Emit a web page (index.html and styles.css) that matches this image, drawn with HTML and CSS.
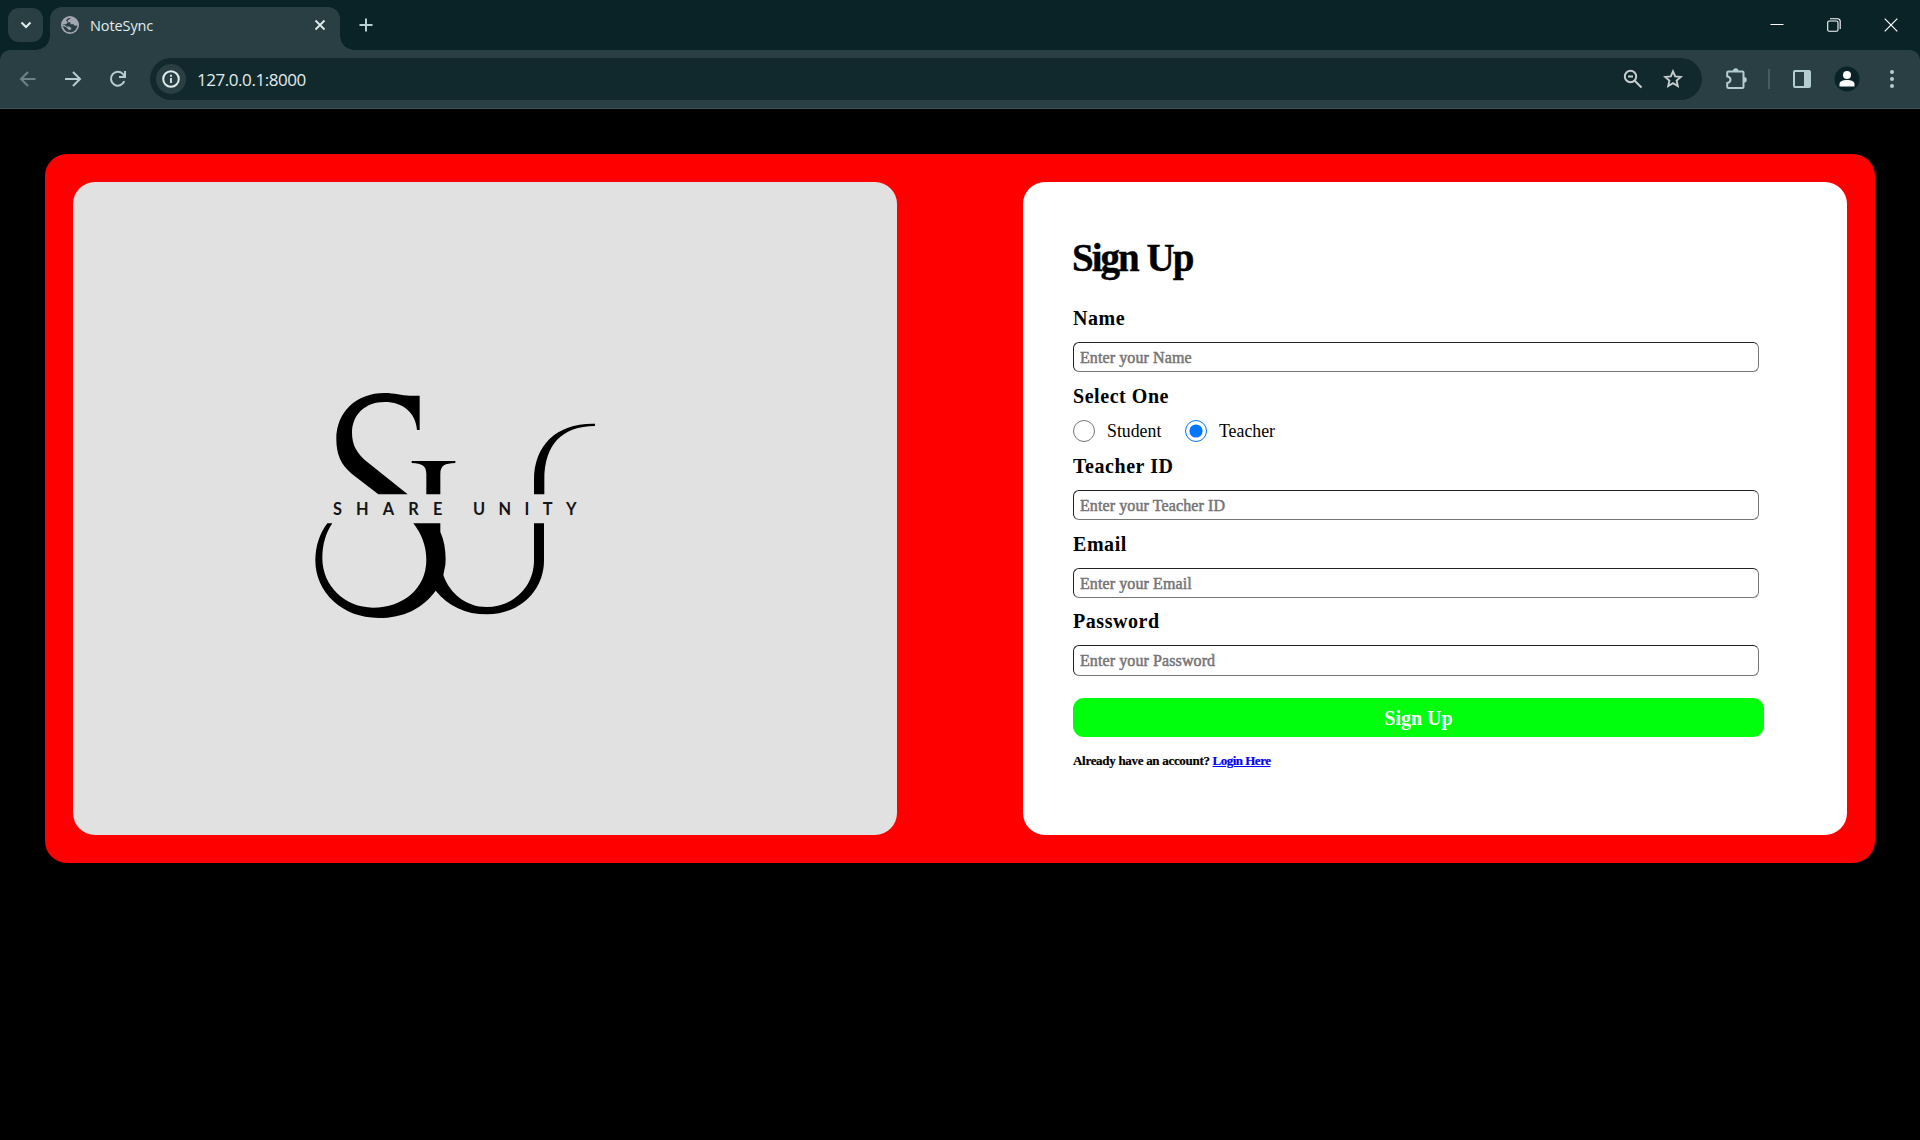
FILE: index.html
```html
<!DOCTYPE html>
<html lang="en">
<head>
<meta charset="utf-8">
<title>NoteSync</title>
<link rel="stylesheet" href="styles.css">
</head>
<body>
<header class="browser">
  <div class="tabstrip">
    <div class="tab-search"><svg width="12" height="12" viewBox="0 0 12 12"><path d="M1.5 3.5 6 8l4.500-4.500" fill="none" stroke="#e3ecec" stroke-width="2"/></svg></div>
    <div class="tab">
      <svg class="globe" width="18" height="18" viewBox="0 0 18 18"><circle cx="9" cy="9" r="9" fill="#a3a6b0"/><path d="M10.200 1.900L6.800 4.300V6.200H9.300L9.600 8.300H12.500L13.600 9.800L16.300 9.400C16 13.200 13 16.200 9.300 16.300L7.300 16V14.200L10.200 13.600V12L8.300 10.600H5.200L3.800 9L1.800 8.500C2 11.500 3.300 14 5.500 15.400L7.300 16L7.500 13.300L5.500 11.500L1.700 9.500V8.200H5L6.800 6.500L5 4.500L7 2.200Z" fill="#293f43"/></svg>
      <span class="tab-title">NoteSync</span>
      <svg class="tab-close" width="12" height="12" viewBox="0 0 12 12"><path d="M1.500 1.500l9 9M10.500 1.500l-9 9" stroke="#e3ecec" stroke-width="1.800"/></svg>
    </div>
    <svg class="new-tab" width="14" height="14" viewBox="0 0 14 14"><path d="M7 .5v13M.5 7h13" stroke="#b9cfd2" stroke-width="2"/></svg>
    <div class="window-controls">
      <svg width="14" height="14" viewBox="0 0 14 14"><path d="M.5 6.500h13" stroke="#fff"/></svg>
      <svg width="14" height="14" viewBox="0 0 14 14"><g fill="none" stroke="#fff" stroke-width="1.100"><rect x=".7" y="3" width="10.300" height="10.300" rx="1.500"/><path d="M3 .8h7.500a2.700 2.700 0 0 1 2.700 2.700V11"/></g></svg>
      <svg width="14" height="14" viewBox="0 0 14 14"><path d="M.7.700l12.600 12.600M13.300.700.7 13.300" stroke="#fff" stroke-width="1.200"/></svg>
    </div>
  </div>
  <div class="toolbar">
    <svg class="nav dim" width="18" height="18" viewBox="0 0 18 18"><path d="M16.500 9H2.500M9 2 2 9l7 7"/></svg>
    <svg class="nav" width="18" height="18" viewBox="0 0 18 18"><path d="M1 9h14.500M9 2l7 7-7 7"/></svg>
    <svg class="nav" width="18" height="18" viewBox="0 0 18 18"><path d="M15.300 11.200A6.900 6.900 0 1 1 14.300 4.500L16 6.300M16 1v6h-6"/></svg>
    <div class="omnibox">
      <div class="site-info"><svg width="18" height="18" viewBox="0 0 18 18"><circle cx="9" cy="9" r="7.800" fill="none" stroke="#e3ecec" stroke-width="2"/><path d="M9 8v5M9 4.800v2" stroke="#e3ecec" stroke-width="1.800"/></svg></div>
      <span class="url">127.0.0.1:8000</span>
      <svg class="zoom-icon" width="20" height="20" viewBox="0 0 20 20"><g fill="none" stroke="#c7cdce" stroke-width="2"><circle cx="7.500" cy="7.500" r="5.700"/><path d="M11.700 11.700 18.500 18.500M5 7.500h5"/></g></svg>
      <svg width="20" height="20" viewBox="0 0 20 20"><path d="M10 2.300l2.200 5.100 5.600.5-4.200 3.700 1.200 5.500L10 14.200l-4.800 2.900 1.200-5.500L2.200 7.900l5.600-.5z" fill="none" stroke="#c7cdce" stroke-width="1.900"/></svg>
    </div>
    <svg class="puzzle" width="22" height="22" viewBox="0 0 22 22"><path d="M3.500 3.500H17.500Q18.500 3.500 18.500 4.500V19Q18.500 20 17.500 20H3.500Q2.200 20 2.200 19V15Q5.500 14.500 5.500 11.800Q5.500 9 2.200 8.500V4.500Q2.200 3.500 3.500 3.500Z" fill="none" stroke="#b3cdd1" stroke-width="2"/><path d="M8 3a2.700 2.700 0 0 1 5.400 0zM19 9a2.800 2.800 0 0 1 0 5.600z" fill="#b3cdd1"/></svg>
    <i class="separator"></i>
    <svg class="side-panel" width="18" height="18" viewBox="0 0 18 18"><rect x="1" y="1" width="16" height="16" rx="1" fill="none" stroke="#b3cdd1" stroke-width="2"/><path d="M11 1h6v16h-6z" fill="#b3cdd1"/></svg>
    <svg class="profile" width="26" height="26" viewBox="0 0 26 26"><circle cx="13" cy="13" r="12.500" fill="#0a2327"/><circle cx="13" cy="9" r="4" fill="#fff"/><path d="M5.500 20.500V18c0-2.600 3.700-4 7.500-4s7.500 1.400 7.500 4v2.500z" fill="#fff"/></svg>
    <svg class="menu" width="4" height="20" viewBox="0 0 4 20"><g fill="#b3cdd1"><circle cx="2" cy="3" r="2"/><circle cx="2" cy="10" r="2"/><circle cx="2" cy="17" r="2"/></g></svg>
  </div>
</header>
<main class="container">
  <section class="brand">
    <svg class="logo" viewBox="0 0 930 750" role="img" aria-label="Share Unity">
      <path d="M359 47V150H351C347 98 309 66 254 66C194 66 156 106 156 158C156 194 170 219 199 244L323 343H235L155 281C122 254 109 222 109 178C109 96 168 39 254 39C284 39 304 47 330 47Z"/>
      <path d="M335 243H466V249C435 250 421 256 421 282V343H379V282C379 257 366 250 335 249Z"/>
      <path d="M885 131V138C785 139 733 194 733 300V343H702V300C702 195 771 128 885 131Z"/>
      <path d="M82 430H97C77 459 67 495 67 535C67 618 135 683 219 683C310 683 379 625 379 540C379 497 364 461 340 430H421V456C434 484 439 521 436 555L430 585C449 641 499 681 559 681C641 681 702 620 702 541V430H732V541C732 634 658 703 561 703C496 703 445 678 407 632C368 686 310 714 236 714C126 714 46 637 46 541C46 500 58 462 82 430Z"/>
      <text x="99" y="404" textLength="328">SHARE</text>
      <text x="519" y="404" textLength="311">UNITY</text>
    </svg>
  </section>
  <section class="panel">
    <h1>Sign Up</h1>
    <form class="form">
      <label class="label" for="name">Name</label>
      <input class="field" id="name" type="text" placeholder="Enter your Name">
      <span class="label">Select One</span>
      <div class="choices">
        <input class="radio" id="student" type="radio" name="role"><label class="choice student" for="student">Student</label>
        <input class="radio" id="teacher" type="radio" name="role" checked><label class="choice" for="teacher">Teacher</label>
      </div>
      <label class="label" for="tid">Teacher ID</label>
      <input class="field" id="tid" type="text" placeholder="Enter your Teacher ID">
      <label class="label" for="email">Email</label>
      <input class="field email" id="email" type="email" placeholder="Enter your Email">
      <label class="label" for="password">Password</label>
      <input class="field last" id="password" type="password" placeholder="Enter your Password">
      <button class="submit" type="button">Sign Up</button>
    </form>
    <p class="login"><span class="question">Already have an account?</span><a href="#">Login Here</a></p>
  </section>
</main>
</body>
</html>
```
FILE: styles.css
```css
* { box-sizing: border-box; }
body { margin: 0; background: #000; height: 1140px; overflow: hidden; font-family: "Liberation Serif", serif; color: #000; }
svg { display: block; flex: none; }

.browser { font-family: "Open Sans", sans-serif; background: #0a2327; }
.tabstrip { height: 50px; display: flex; align-items: flex-start; }
.tab-search { width: 35px; height: 34px; margin: 8px 0 0 8px; border-radius: 11px; background: #293f43; display: flex; align-items: center; justify-content: center; }
.tab { position: relative; width: 290px; height: 43px; margin: 7px 0 0 7px; padding: 0 14px 7px 11px; border-radius: 12px 12px 0 0; background: #293f43; display: flex; align-items: center; }
.tab::before, .tab::after { content: ""; position: absolute; bottom: 0; width: 14px; height: 14px; }
.tab::before { left: -14px; background: radial-gradient(circle at 0 0, transparent 13.500px, #293f43 14px); }
.tab::after { right: -14px; background: radial-gradient(circle at 100% 0, transparent 13.500px, #293f43 14px); }
.tab-title { flex: 1; margin-left: 11px; color: #e3ecec; font-size: 14.500px; letter-spacing: -0.1px; }
.new-tab { margin: 18px 0 0 18.500px; }
.window-controls { margin: 18px 22px 0 auto; display: flex; gap: 43px; }
.toolbar { height: 59px; border-radius: 10px 10px 0 0; border-bottom: 1px solid #3c5054; background: #293f43; display: flex; align-items: center; padding: 0 26px 0 18.500px; }
.nav { margin-right: 27px; fill: none; stroke: #b3cdd1; stroke-width: 2; }
.nav.dim { stroke: #6d8286; }
.omnibox { flex: 1; margin: 0 23px 0 -3.500px; height: 42px; border-radius: 21px; background: #11292d; display: flex; align-items: center; padding: 0 19px 0 6px; }
.site-info { width: 30px; height: 30px; border-radius: 15px; background: #293f43; display: flex; align-items: center; justify-content: center; }
.url { flex: 1; margin-left: 11px; color: #e3ecec; font-size: 17px; letter-spacing: -0.45px; }
.zoom-icon { margin-right: 20px; }
.separator { width: 2px; height: 20px; margin: 0 23px 0 21px; background: #465c60; }
.profile { margin: 0 30px 0 23px; }

.container { width: 1830px; height: 709px; margin: 45px auto 0; padding: 28px; border-radius: 22px; background: #f00; display: flex; justify-content: space-between; }
.brand, .panel { width: 824px; height: 653px; border-radius: 22px; }
.brand { background: #e1e1e1; padding: 198px 0 0 227px; }
.logo { width: 310px; height: 250px; }
.logo text { font: 700 49px Lato, sans-serif; fill: #151515; }
.panel { background: #fff; padding: 51px 83px 0 50px; }
h1 { margin: 0 0 25px; height: 50px; font-size: 39px; line-height: 50px; letter-spacing: -2px; word-spacing: 1px; text-indent: -1px; -webkit-text-stroke: 0.4px #000; }
.form { display: flex; flex-direction: column; }
.label { height: 22px; margin-bottom: 12px; font-size: 20px; line-height: 20px; font-weight: 700; letter-spacing: 0.55px; }
.field { width: 686px; height: 30px; margin: 0 0 14px; padding: 1px 6px 0; border: 1px solid #767676; border-top-color: #222; border-left-color: #222; border-radius: 6px; background: #fff; font: 16px "Liberation Serif", serif; letter-spacing: 0.1px; }
.field::placeholder { color: #757575; -webkit-text-stroke: 0.5px #757575; opacity: 1; }
.choices { height: 22px; margin: 0 0 14px; display: flex; align-items: center; }
.radio { width: 22px; height: 22px; margin: 0 12px 0 0; }
.choice { font-size: 17.800px; padding-top: 1px; }
.choice.student { width: 78px; }
.field.email { margin-bottom: 13px; }
.field.last { height: 31px; margin-bottom: 22px; }
.submit { height: 39px; padding: 2px 0 0; border: 0; border-radius: 11px; background: #00ff0c; color: #fff; font: 700 20px "Liberation Serif", serif; }
.login { margin: 16px 0 0; font-size: 13px; line-height: 16px; font-weight: 700; letter-spacing: -0.5px; white-space: nowrap; -webkit-text-stroke: 0.2px; }
.question { display: inline-block; width: 139.500px; letter-spacing: -0.3px; }
.login a { color: #00f; }
```
